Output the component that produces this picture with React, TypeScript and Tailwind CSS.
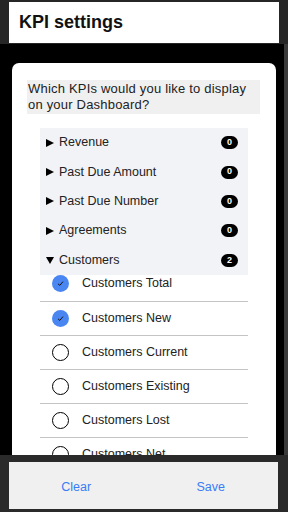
const groups = [
  { name: 'Revenue', count: 0, open: false },
  { name: 'Past Due Amount', count: 0, open: false },
  { name: 'Past Due Number', count: 0, open: false },
  { name: 'Agreements', count: 0, open: false },
  { name: 'Customers', count: 2, open: true },
];

const customers = [
  { name: 'Customers Total', checked: true },
  { name: 'Customers New', checked: true },
  { name: 'Customers Current', checked: false },
  { name: 'Customers Existing', checked: false },
  { name: 'Customers Lost', checked: false },
  { name: 'Customers Net', checked: false },
];

function Caret({ open }: { open: boolean }) {
  return (
    <svg width="8" height="8" viewBox="0 0 8 8" className="shrink-0">
      {open ? <path d="M0 1 L8 1 L4 8 Z" fill="#000" /> : <path d="M0 0 L8 4 L0 8 Z" fill="#000" />}
    </svg>
  );
}

function Check({ checked }: { checked: boolean }) {
  if (checked) {
    return (
      <div className="w-[17px] h-[17px] rounded-full bg-[#4a86f2] flex items-center justify-center shrink-0">
        <svg width="9" height="9" viewBox="0 0 9 9">
          <path d="M2 4.8 L3.8 6.4 L7 2.6" stroke="#111" strokeWidth="1" fill="none" />
        </svg>
      </div>
    );
  }
  return <div className="w-[17px] h-[17px] rounded-full border-[1.5px] border-black shrink-0" />;
}

export default function App() {
  return (
    <div className="w-[288px] h-[512px] bg-[#262626] flex flex-col overflow-hidden font-['Liberation_Sans',Arial,sans-serif]">
      {/* Header */}
      <div className="flex pt-[2px] pl-[9px] pr-[9px] h-[44px] shrink-0">
        <div className="flex-1 h-[41px] bg-white flex items-center pl-[10px] pb-[1px]">
          <h1 className="text-[18px] font-bold text-[#111]">KPI settings</h1>
        </div>
      </div>

      {/* Body */}
      <div className="flex-1 flex min-h-0">
        <div className="flex-1 bg-black pt-[19px] pl-[12px] pr-[8px] overflow-hidden">
          <div className="bg-white rounded-t-[7px] h-full pt-[17px] pl-[15px] pr-[16px]">
            <div className="bg-[#f0f0f0] h-[34px] pl-[1px] pt-[1px] text-[13px] leading-[16px] text-[#222] tracking-[0.2px]">
              Which KPIs would you like to display on your Dashboard?
            </div>

            <div className="mt-[14px] ml-[13px] mr-[12px]">
              <div className="bg-[#f2f3f7]">
                {groups.map((g) => (
                  <div key={g.name} className="h-[29.4px] flex items-center pl-[6px] pr-[10px]">
                    <Caret open={g.open} />
                    <span className="ml-[5px] flex-1 text-[12.5px] text-[#222]">{g.name}</span>
                    <span className="w-[17px] h-[13px] rounded-full bg-black text-white text-[9px] font-bold flex items-center justify-center">
                      {g.count}
                    </span>
                  </div>
                ))}
              </div>
              {customers.map((c, i) => (
                <div
                  key={c.name}
                  className={`flex items-center pl-[12px] border-b border-[#c4c4c4] ${i === 0 ? 'h-[27px] pb-[9px]' : 'h-[34px]'}`}
                >
                  <Check checked={c.checked} />
                  <span className="ml-[13px] text-[12.5px] text-[#222]">{c.name}</span>
                </div>
              ))}
            </div>
          </div>
        </div>
        <div className="w-[4px] bg-[#3a3a3a]" />
      </div>

      {/* Footer */}
      <div className="h-[57px] shrink-0 bg-[#2a2a2a] pt-[7px] pl-[9px] pr-[10px]">
        <div className="h-[47px] bg-[#f0f0f0] flex">
          <button className="flex-1 text-[#3a7cf5] text-[12.5px] pt-[3px]">Clear</button>
          <button className="flex-1 text-[#3a7cf5] text-[12.5px] pt-[3px]">Save</button>
        </div>
      </div>
    </div>
  );
}
